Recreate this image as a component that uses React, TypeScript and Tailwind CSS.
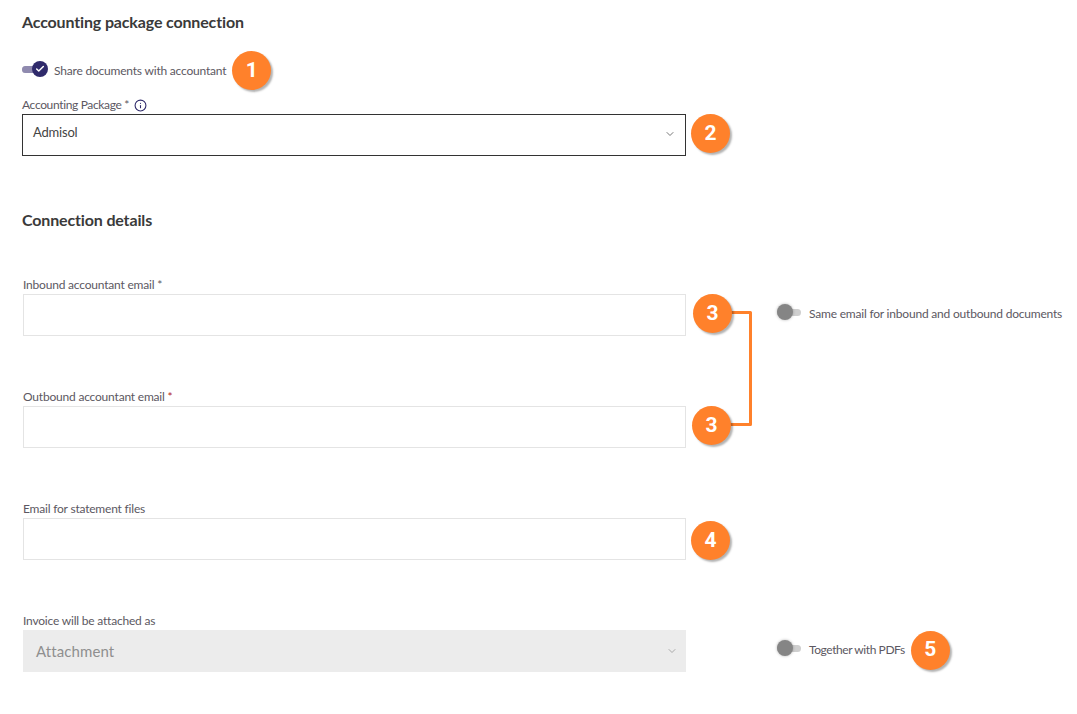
import { ChevronDown, Check, Info } from "lucide-react";

function Badge({ n, className = "" }: { n: number; className?: string }) {
  return (
    <div
      className={`relative z-10 flex h-[39px] w-[39px] shrink-0 items-center justify-center rounded-full bg-[#ff812b] font-['Roboto',sans-serif] text-[21px] font-bold text-white shadow-[2px_2px_2px_rgba(0,0,0,0.3)] ${className}`}
    >
      {n}
    </div>
  );
}

function Toggle({ on = false, className = "" }: { on?: boolean; className?: string }) {
  return (
    <div className={`relative h-[7px] w-[24px] shrink-0 rounded-full bg-[#cfcfcf] ${className}`}>
      {on && <div className="h-full w-full rounded-full bg-[#8f8aaf]" />}
      {on ? (
        <div className="absolute -top-[5px] left-[10px] flex h-[16px] w-[16px] items-center justify-center rounded-full bg-[#2f2a6b]">
          <Check size={10} strokeWidth={3.5} className="text-white" />
        </div>
      ) : (
        <div className="absolute -top-[5px] left-0 h-[16px] w-[16px] rounded-full bg-[#858585] shadow-[0_0_3px_rgba(0,0,0,0.3)]" />
      )}
    </div>
  );
}

function Field({ label, children }: { label: React.ReactNode; children: React.ReactNode }) {
  return (
    <div className="w-[663px] shrink-0">
      <div className="h-[18px] text-[12px] leading-[18px] tracking-[-0.2px] text-[#5c5862]">{label}</div>
      {children}
    </div>
  );
}

function TextBox() {
  return <div className="h-[42px] w-full border border-[#e4e4e4] bg-white" />;
}

export default function App() {
  return (
    <div className="relative h-[714px] w-[1077px] overflow-hidden bg-white font-['Lato',sans-serif] text-[#444]">
      <h2 className="pt-[13px] pl-[22px] text-[16px] leading-[18px] font-bold tracking-[-0.15px] text-[#3a3a3a]">
        Accounting package connection
      </h2>

      {/* share toggle */}
      <div className="mt-[20px] flex items-center pl-[22px]">
        <Toggle on className="mb-[2px]" />
        <span className="ml-[8px] text-[12px] tracking-[-0.2px] text-[#5c5862]">Share documents with accountant</span>
        <Badge n={1} className="ml-[6px]" />
      </div>

      <div className="mt-[6px] flex items-end pl-[22px]">
        <div className="w-[664px] shrink-0">
          <div className="flex h-[18px] items-center gap-[5px] text-[12px] tracking-[-0.35px] text-[#5c5862]">
            Accounting Package *
            <Info size={13} strokeWidth={2} className="text-[#2f2a6b]" />
          </div>
          <div className="flex h-[42px] items-center justify-between border border-[#333] pr-[9px] pl-[10px] text-[13px] tracking-[-0.2px] text-[#444]">
            <span className="pb-[4px]">Admisol</span>
            <ChevronDown size={12} strokeWidth={2} className="mb-[2px] text-[#777]" />
          </div>
        </div>
        <Badge n={2} className="mb-[3px] ml-[5px]" />
      </div>

      <h2 className="mt-[55px] pl-[22px] text-[16px] leading-[18px] font-bold tracking-[-0.15px] text-[#3a3a3a]">
        Connection details
      </h2>

      <div className="mt-[47px] flex items-start pl-[23px]">
        <Field label={<>Inbound accountant email *</>}>
          <TextBox />
        </Field>
        <Badge n={3} className="mt-[18px] ml-[7px]" />
        <div className="mt-[29px] ml-[45px] flex items-center">
          <Toggle className="mb-[4px]" />
          <span className="ml-[8px] text-[12px] tracking-[-0.2px] text-[#5c5862]">
            Same email for inbound and outbound documents
          </span>
        </div>
      </div>

      <div className="mt-[52px] flex items-start pl-[23px]">
        <Field label={<>Outbound accountant email <span className="text-[#b3261e]">*</span></>}>
          <TextBox />
        </Field>
        <Badge n={3} className="mt-[18px] ml-[6px]" />
      </div>

      <div className="mt-[52px] flex items-start pl-[23px]">
        <Field label="Email for statement files">
          <TextBox />
        </Field>
        <Badge n={4} className="mt-[21px] ml-[5px]" />
      </div>

      <div className="mt-[52px] flex items-start pl-[23px]">
        <Field label="Invoice will be attached as">
          <div className="flex h-[42px] items-center justify-between bg-[#ececec] pr-[8px] pl-[13px] text-[15px] tracking-[0.1px] text-[#8f8f8f]">
            Attachment
            <ChevronDown size={12} strokeWidth={2} className="text-[#aaa]" />
          </div>
        </Field>
        <div className="mt-[18px] ml-[91px] flex h-[40px] items-center">
          <Toggle className="mb-[4px]" />
          <span className="ml-[8px] text-[12px] tracking-[-0.42px] text-[#5c5862]">Together with PDFs</span>
          <Badge n={5} className="ml-[6px]" />
        </div>
      </div>

      {/* bracket joining the two 3 badges */}
      <svg className="absolute top-[309px] left-[728px]" width="26" height="118" fill="none">
        <path d="M2 3.5H22.5V115.5H2" stroke="#ff812b" strokeWidth="3" strokeLinejoin="round" />
      </svg>
    </div>
  );
}
